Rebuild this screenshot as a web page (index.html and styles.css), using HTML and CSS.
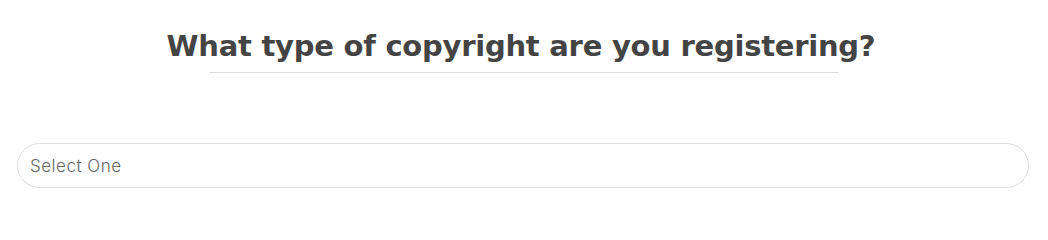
FILE: index.html
```html
<!DOCTYPE html>
<html lang="en">
<head>
<meta charset="utf-8">
<link rel="stylesheet" href="styles.css">
</head>
<body>
<main class="page">
  <div class="heading-wrap">
    <h1 class="heading">What type of copyright are you registering?</h1>
    <div class="rule"></div>
  </div>
  <div class="field">
    <div class="select">Select One</div>
  </div>
</main>
</body>
</html>
```

FILE: styles.css
```css
html, body {
  margin: 0;
  padding: 0;
  background: #ffffff;
}
.page {
  width: 1048px;
  padding-top: 26px;
  font-family: Inter, "DejaVu Sans", sans-serif;
}
.heading-wrap {
  display: flex;
  flex-direction: column;
  align-items: center;
}
.heading {
  margin: 0;
  font-family: "DejaVu Sans", sans-serif;
  font-weight: 700;
  font-size: 29px;
  line-height: 40px;
  color: #444444;
  letter-spacing: -0.25px;
  margin-left: -6px;
}
.rule {
  width: 630px;
  height: 1px;
  background: #dddddd;
  margin-top: 6px;
  margin-left: -1px;
}
.field {
  padding: 70px 0 0 17px;
}
.select {
  box-sizing: border-box;
  width: 1012px;
  height: 45px;
  border: 1px solid #dddddd;
  border-radius: 23px;
  padding: 0 12px;
  display: flex;
  align-items: center;
  font-family: Inter, sans-serif;
  font-weight: 300;
  font-size: 17px;
  letter-spacing: 0.5px;
  color: #666666;
}
```
